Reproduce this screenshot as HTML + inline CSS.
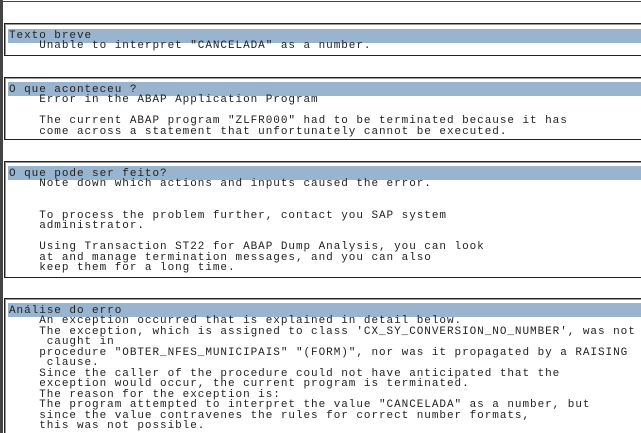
<!DOCTYPE html>
<html style="overflow:hidden;width:641px;height:433px"><head><meta charset="utf-8"><style>
body{margin:0;width:641px;height:433px;overflow:hidden;background:#fff;position:relative;font-family:"Liberation Mono",monospace}
.pl{position:absolute;left:0;top:0;width:3px;height:433px;background:#444}
.tl{position:absolute;left:0;top:1px;width:641px;height:1px;background:#444}
.box{position:absolute;left:4px;width:700px;border:1px solid #222;box-shadow:inset 1px 1px 0 #999}
.bar{position:absolute;left:8px;width:633px;height:14px;background:#98b4cf}
pre{position:absolute;left:9px;margin:0;font-size:11px;letter-spacing:0.95px;line-height:10.45px;color:#222;font-family:"Liberation Mono",monospace}
</style></head><body>
<div class="pl"></div><div class="tl"></div>
<div class="box" style="top:23px;height:31px"></div>
<div class="bar" style="top:29px"></div>
<pre style="top:31px">Texto breve
    Unable to interpret "CANCELADA" as a number.</pre>

<div class="box" style="top:77px;height:61px"></div>
<div class="bar" style="top:82px"></div>
<pre style="top:85px">O que aconteceu ?
    Error in the ABAP Application Program

    The current ABAP program "ZLFR000" had to be terminated because it has
    come across a statement that unfortunately cannot be executed.</pre>

<div class="box" style="top:161px;height:115px"></div>
<div class="bar" style="top:166px"></div>
<pre style="top:169px">O que pode ser feito?
    Note down which actions and inputs caused the error.


    To process the problem further, contact you SAP system
    administrator.

    Using Transaction ST22 for ABAP Dump Analysis, you can look
    at and manage termination messages, and you can also
    keep them for a long time.</pre>

<div class="box" style="top:298px;height:140px"></div>
<div class="bar" style="top:303px"></div>
<pre style="top:306px">Análise do erro
    An exception occurred that is explained in detail below.
    The exception, which is assigned to class 'CX_SY_CONVERSION_NO_NUMBER', was not
     caught in
    procedure "OBTER_NFES_MUNICIPAIS" "(FORM)", nor was it propagated by a RAISING
     clause.
    Since the caller of the procedure could not have anticipated that the
    exception would occur, the current program is terminated.
    The reason for the exception is:
    The program attempted to interpret the value "CANCELADA" as a number, but
    since the value contravenes the rules for correct number formats,
    this was not possible.</pre>
</body></html>
